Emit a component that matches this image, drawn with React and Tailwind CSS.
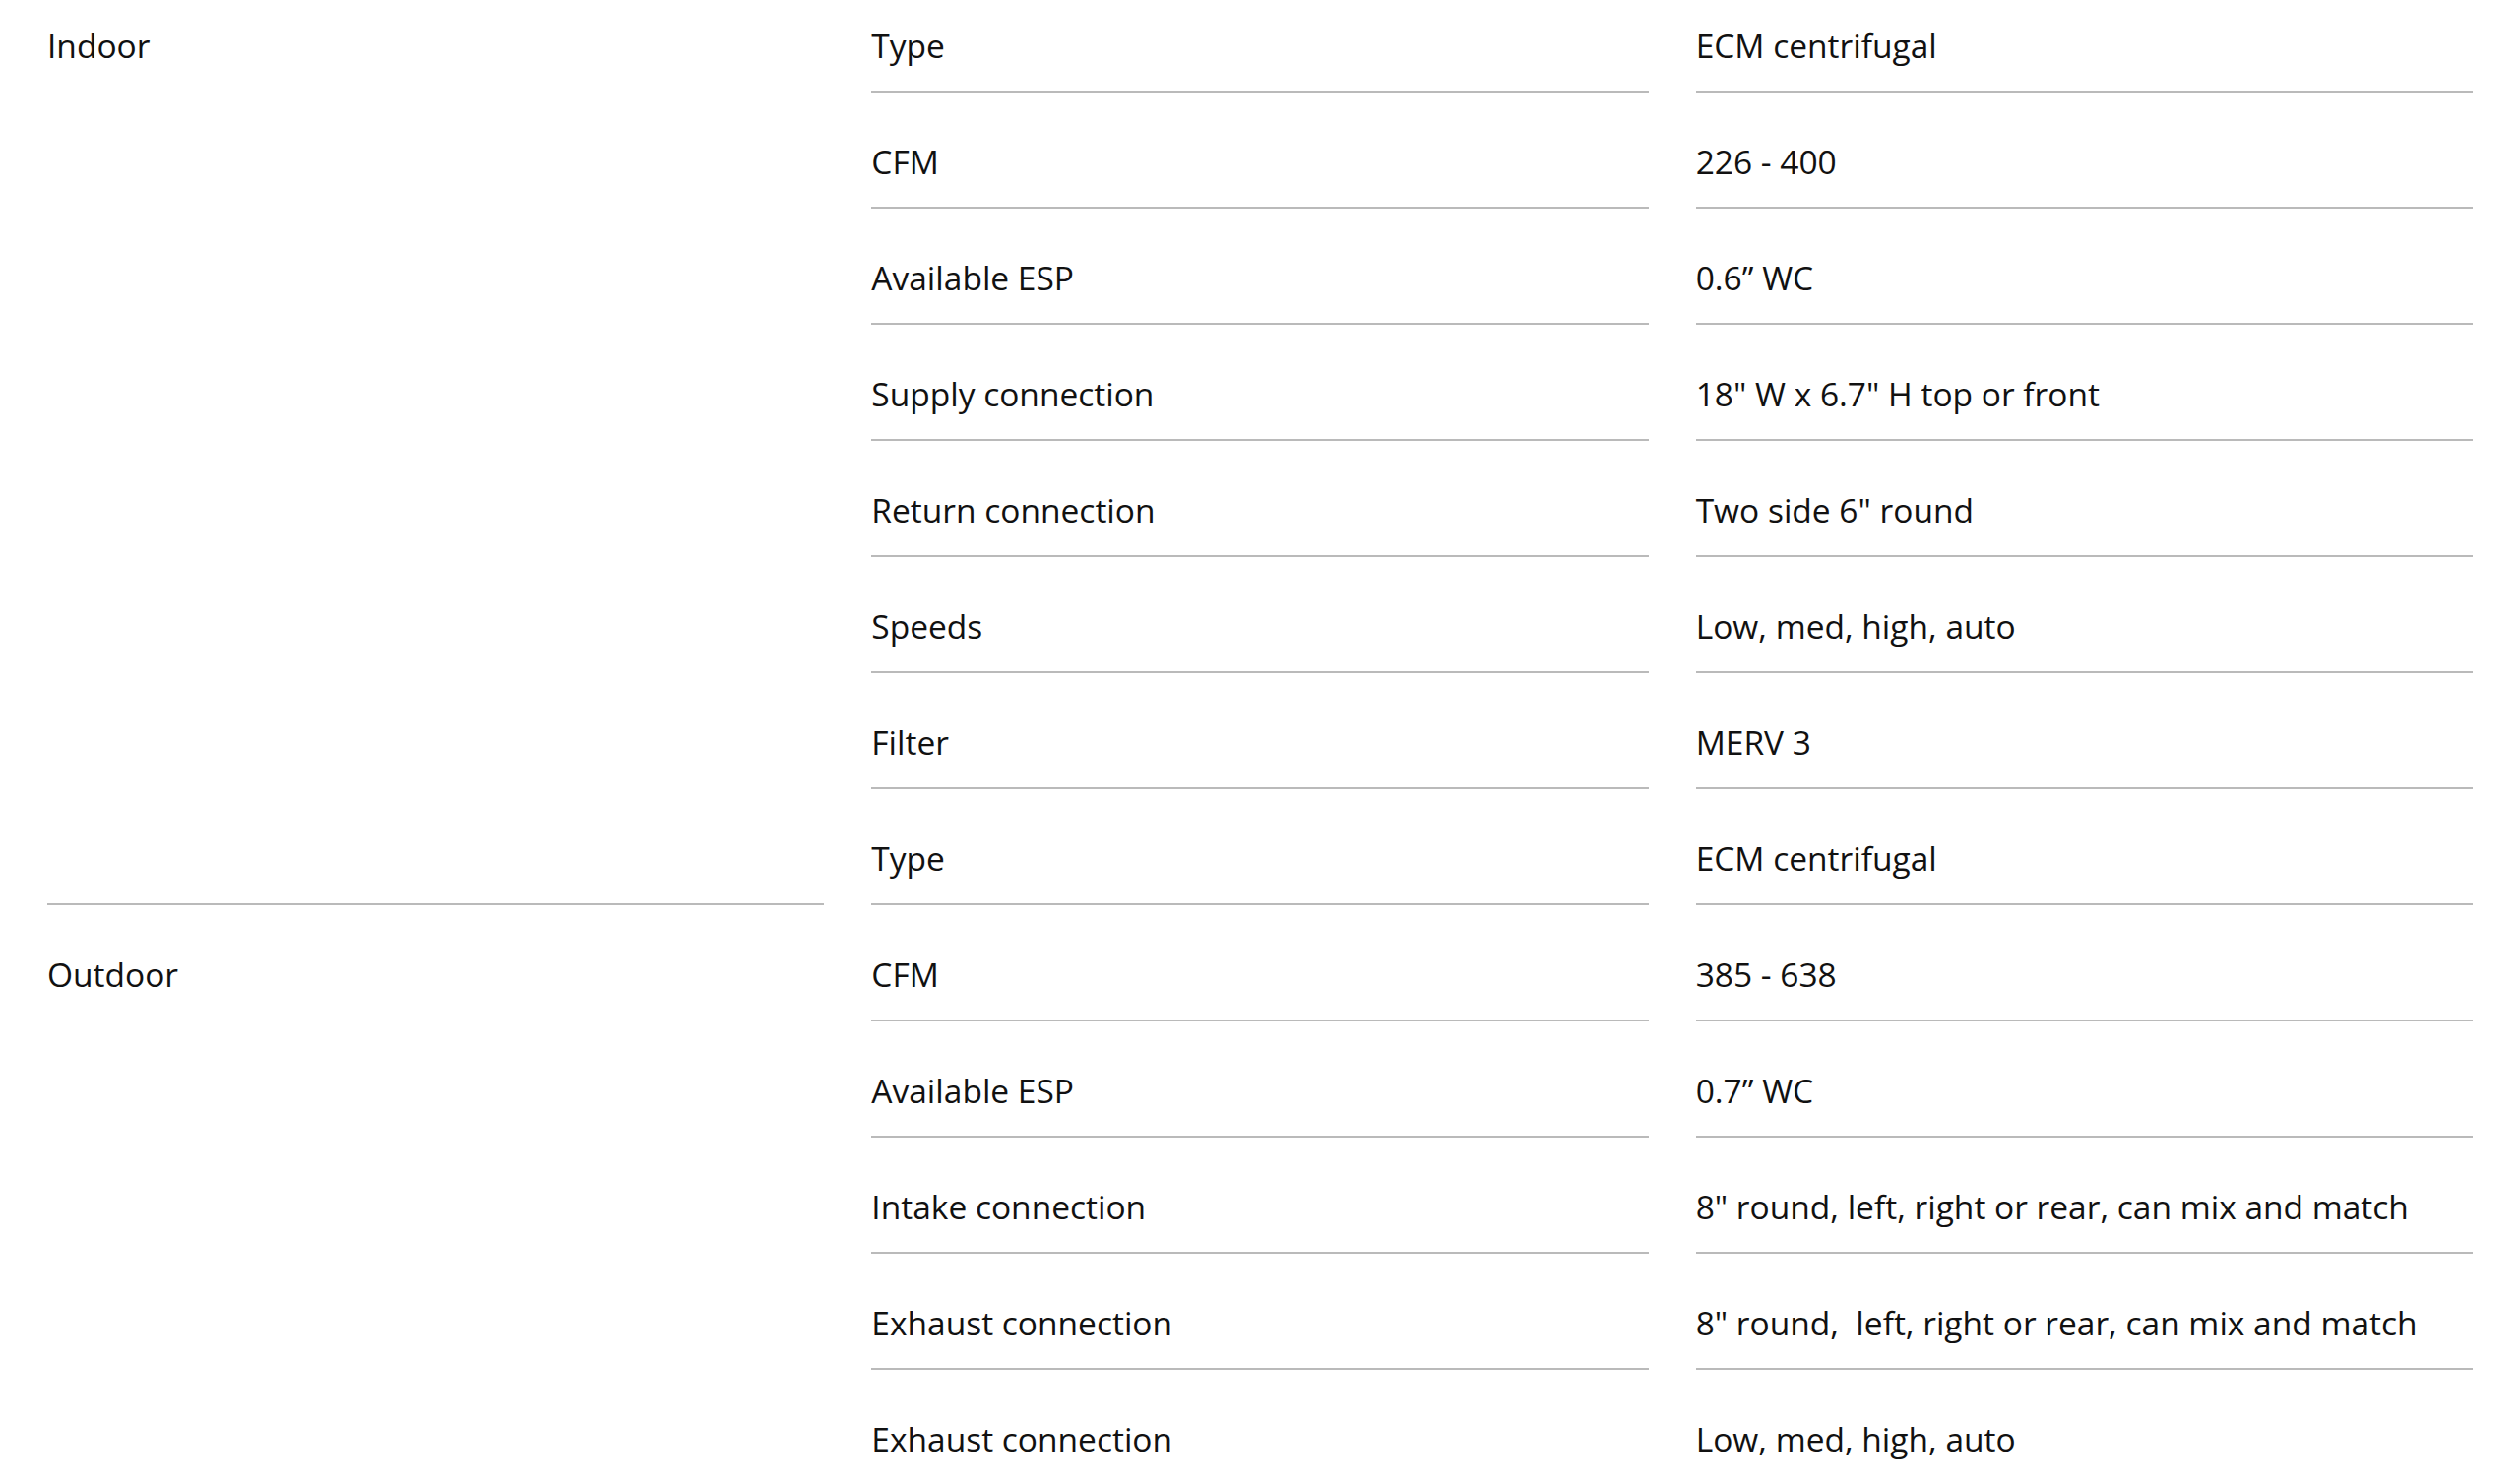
import React from 'react';

const indoor = [
  ['Type', 'ECM centrifugal'],
  ['CFM', '226 - 400'],
  ['Available ESP', '0.6\u201d WC'],
  ['Supply connection', '18" W x 6.7" H top or front'],
  ['Return connection', 'Two side 6" round'],
  ['Speeds', 'Low, med, high, auto'],
  ['Filter', 'MERV 3'],
  ['Type', 'ECM centrifugal'],
];

const outdoor = [
  ['CFM', '385 - 638'],
  ['Available ESP', '0.7\u201d WC'],
  ['Intake connection', '8" round, left, right or rear, can mix and match'],
  ['Exhaust connection', '8" round,\u00a0 left, right or rear, can mix and match'],
  ['Exhaust connection', 'Low, med, high, auto'],
];

const rows = [...indoor, ...outdoor];

// one cell: text centred in a band with the rule underneath
const Cell = ({ children, first }) => (
  <div className={first ? '' : 'pt-[24px]'}>
    <div className="flex h-[94px] items-center border-b-2 border-[#bababa]">
      <span className="whitespace-pre">{children}</span>
    </div>
  </div>
);

export default function App() {
  return (
    <div
      className="min-h-screen bg-white px-12 text-[33.5px] text-[#111]"
      style={{ fontFamily: '"Open Sans", "Liberation Sans", sans-serif' }}
    >
      <div className="grid grid-cols-3 gap-x-12">
        {/* group labels */}
        <div className="flex flex-col">
          <div className="h-[920px] border-b-2 border-[#bababa]">
            <div className="flex h-[92px] items-center">Indoor</div>
          </div>
          <div className="pt-[24px]">
            <div className="flex h-[92px] items-center">Outdoor</div>
          </div>
        </div>

        {/* spec rows */}
        <div className="col-span-2 grid grid-cols-2 gap-x-12">
          {rows.map(([label, value], i) => (
            <React.Fragment key={i}>
              <Cell first={i === 0}>{label}</Cell>
              <Cell first={i === 0}>{value}</Cell>
            </React.Fragment>
          ))}
        </div>
      </div>
    </div>
  );
}
